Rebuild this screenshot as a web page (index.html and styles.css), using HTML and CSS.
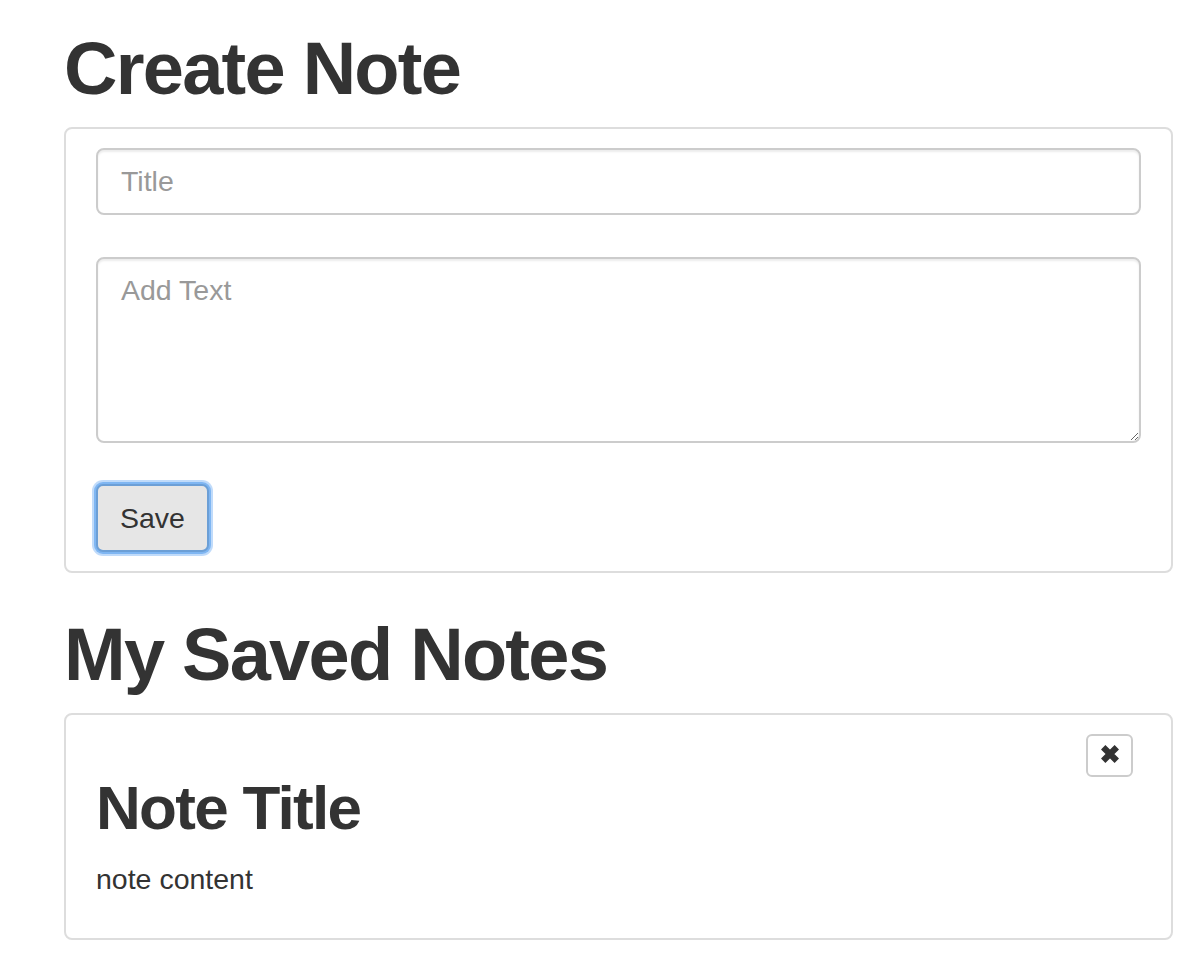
FILE: index.html
```html
<!DOCTYPE html>
<html lang="en">
<head>
<meta charset="utf-8">
<title>Notes</title>
<link rel="stylesheet" href="styles.css">
</head>
<body>
<div class="container">
  <h1 class="page-title page-title-first">Create Note</h1>
  <div class="panel">
    <form class="panel-body create-form">
      <input class="field field-input" type="text" placeholder="Title">
      <textarea class="field field-textarea" placeholder="Add Text"></textarea>
      <button class="btn-save" type="button">Save</button>
    </form>
  </div>

  <h1 class="page-title page-title-second">My Saved Notes</h1>
  <div class="panel">
    <div class="panel-body note">
      <button class="btn-remove" type="button" aria-label="Delete note">
        <svg class="icon-remove" width="20" height="20" viewBox="0 0 20 20" aria-hidden="true">
          <path d="M3.2 3.2 L16.8 16.8 M16.8 3.2 L3.2 16.8" stroke="#333" stroke-width="6.2" stroke-linecap="butt" fill="none"/>
        </svg>
      </button>
      <h2 class="note-title">Note Title</h2>
      <p class="note-text">note content</p>
    </div>
  </div>
</div>
</body>
</html>
```
FILE: styles.css
```css
* {
  box-sizing: border-box;
}

body {
  margin: 0;
  background: #fff;
  color: #333;
  font-family: "Liberation Sans", Arial, Helvetica, sans-serif;
  font-size: 28.5px;
  line-height: 1.42857;
}

.container {
  padding: 0 17px 0 64px;
}

.page-title {
  font-size: 74px;
  font-weight: bold;
  letter-spacing: -1.75px;
  line-height: 1.1;
  margin: 0;
}

.page-title-first {
  margin: 28px 0 18px;
}

.page-title-second {
  margin: 41px 0 17px;
}

.panel {
  border: 2px solid #ddd;
  border-radius: 8px;
  background: #fff;
}

.panel-body {
  padding: 19px 30px;
}

.create-form {
  display: flex;
  flex-direction: column;
  align-items: stretch;
  margin: 0;
}

.field {
  display: block;
  width: 100%;
  border: 2px solid #ccc;
  border-radius: 8px;
  background: #fff;
  color: #555;
  font-family: inherit;
  font-size: 28.5px;
  line-height: 1.42857;
  box-shadow: inset 0 2px 2px rgba(0, 0, 0, 0.075);
  outline: none;
}

.field::placeholder {
  color: #999;
  opacity: 1;
}

.field-input {
  height: 67px;
  padding: 0 23px;
  margin-bottom: 42px;
}

.field-textarea {
  height: 186px;
  padding: 11px 23px;
  resize: vertical;
  margin: 0 0 41px;
}

.btn-save {
  align-self: flex-start;
  height: 68px;
  padding: 0 22px;
  font-family: inherit;
  font-size: 28.5px;
  color: #333;
  background: #e6e6e6;
  border: 2px solid #6c9fd6;
  border-radius: 7px;
  box-shadow: 0 0 0 2px #7fb6f2, 0 0 0 4px rgba(140, 190, 245, 0.55);
  cursor: pointer;
}

.note {
  padding-bottom: 19px;
}

.btn-remove {
  float: right;
  margin-right: 8px;
  width: 47px;
  height: 43px;
  padding: 0 0 3px;
  border: 2px solid #ccc;
  border-radius: 6px;
  background: #fff;
  display: flex;
  align-items: center;
  justify-content: center;
  cursor: pointer;
}

.icon-remove {
  display: block;
}

.note-title {
  font-size: 62px;
  font-weight: bold;
  letter-spacing: -1.7px;
  line-height: 1.1;
  margin: 40px 0 17px;
}

.note-text {
  margin: 0 0 19.5px;
}
```
